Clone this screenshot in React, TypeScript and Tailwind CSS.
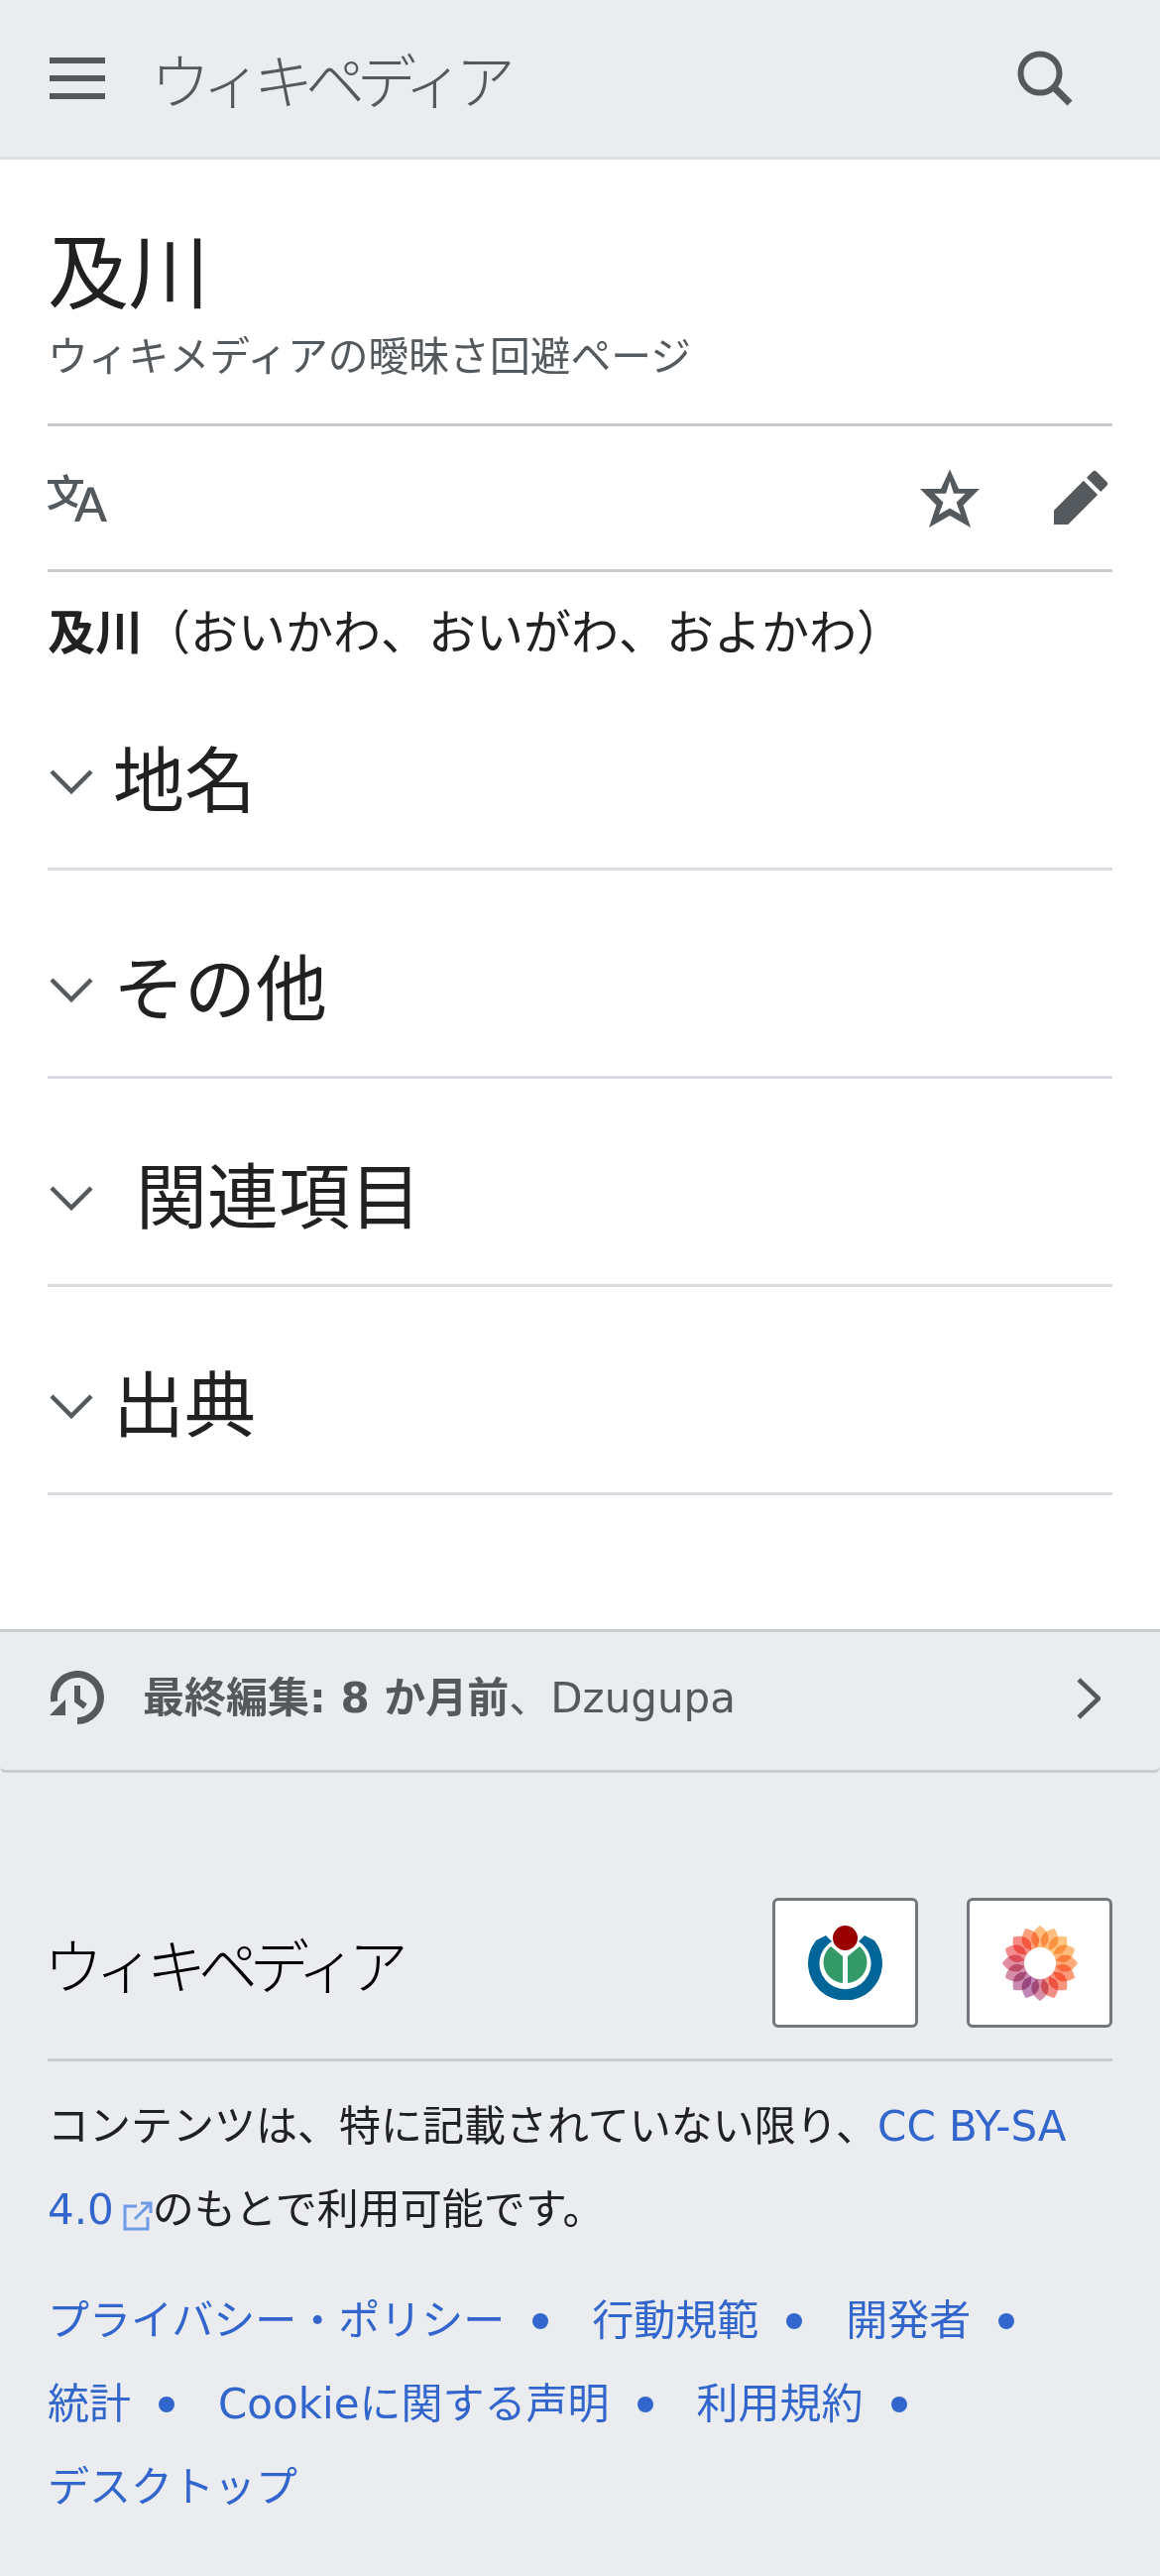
const petals = Array.from({ length: 16 }, (_, i) => i);
const petalColors = ["#fba24e","#fca54f","#fdb04e","#fca34d","#fb8a48","#fb7444","#f76a4a","#ef6355","#c85f83","#a8579a","#b55b92","#c45f87","#d8607a","#ee5f62","#f65f53","#fa7a48"];

function Bars() {
  return (
    <svg width="56" height="42" viewBox="0 0 56 42" fill="#54595d">
      <rect x="0" y="0" width="56" height="6" />
      <rect x="0" y="18" width="56" height="6" />
      <rect x="0" y="36" width="56" height="6" />
    </svg>
  );
}

function Chevron() {
  return (
    <svg className="ml-[2px]" width="44" height="26" viewBox="0 0 44 26" fill="none" stroke="#54595d" strokeWidth="4.5">
      <path d="M2 3 L22 23 L42 3" />
    </svg>
  );
}

function Section({ title, indent }: { title: string; indent?: boolean }) {
  return (
    <div className="h-[210px] pt-[32px] flex items-center border-b-[3px] border-[#d9dce0]">
      <Chevron />
      <h2 className={indent ? "ml-[43px] text-[72px] leading-[90px] text-[#202122]" : "ml-[20px] text-[72px] leading-[90px] text-[#202122]"}>{title}</h2>
    </div>
  );
}

function FooterLink({ label, bullet = true }: { label: string; bullet?: boolean }) {
  return (
    <span className="flex items-center text-[#3366cc]">
      <span>{label}</span>
      {bullet && <span className="w-[16px] h-[16px] rounded-full bg-[#3366cc] ml-[28px] mr-[44px]" />}
    </span>
  );
}

export default function App() {
  return (
    <div className="min-h-[2598px] flex flex-col bg-white font-['DejaVu_Sans','Noto_Sans_CJK_JP',sans-serif]">
      <header className="h-[161px] bg-[#eaecf0] border-b-[3px] border-[#dcdfe3] flex items-center pl-[50px] pr-[88px]">
        <Bars />
        <span className="ml-[46px] text-[60px] leading-[70px] tracking-[-8px] font-light text-[#54595d] font-['Noto_Sans_CJK_JP',serif]">ウィキペディア</span>
        <svg className="ml-auto" width="56" height="56" viewBox="0 0 56 56" fill="none" stroke="#54595d">
          <circle cx="23" cy="23" r="19.5" strokeWidth="6" />
          <path d="M36 36 L53 53" strokeWidth="7" />
        </svg>
      </header>

      <main className="px-[48px]">
        <h1 className="mt-[66px] text-[81.6px] leading-[100px] text-[#202122]">及川</h1>
        <p className="mt-[3px] text-[40.8px] leading-[60px] text-[#54595d]">ウィキメディアの曖昧さ回避ページ</p>
        <div className="mt-[37px] h-[150px] border-y-[3px] border-[#c8ccd1] flex items-center pr-[2px]">
          <svg width="60" height="60" viewBox="0 0 20 20" fill="#54595d">
            <path d="M20 18h-1.44a.6.6 0 0 1-.4-.12.8.8 0 0 1-.23-.31L17 15h-5l-1 2.54a.8.8 0 0 1-.22.3.6.6 0 0 1-.4.14H9l4.55-11.47h1.89zm-3.53-4.31L14.89 9.5a12 12 0 0 1-.39-1.24q-.09.37-.19.69l-.19.56-1.58 4.19zm-6.3-1.58a13.43 13.43 0 0 1-2.91-1.41 11.46 11.46 0 0 0 2.81-5.37H12V4H7.31a4 4 0 0 0-.2-.56C6.87 2.79 6.6 2 6.6 2l-1.47.5s.4.89.6 1.5H0v1.33h2.15A11.23 11.23 0 0 0 5 10.7a17.19 17.19 0 0 1-5 2.1q.56.82.87 1.38a23.28 23.28 0 0 0 5.22-2.51 15.64 15.64 0 0 0 3.56 1.77zM3.63 5.33h4.91a8.11 8.11 0 0 1-2.45 4.45 9.11 9.11 0 0 1-2.46-4.45" />
          </svg>
          <svg className="ml-auto" width="60" height="60" viewBox="0 0 20 20" fill="#54595d">
            <path d="M20 7h-7L10 .5 7 7H0l5.5 5.5L3 20l7-4 7 4-2.5-7.5zm-10 6.5-3.7 2.2 1.5-4.1-3-3h3.9L10 4.4l1.3 4.2h3.9l-3 3 1.5 4.1z" />
          </svg>
          <svg className="ml-[72px]" width="60" height="60" viewBox="0 0 20 20" fill="#54595d">
            <path d="m16.77 8 1.94-2a1 1 0 0 0 0-1.41l-3.34-3.3a1 1 0 0 0-1.41 0L12 3.23zM1 14.25V19h4.75l9.96-9.96-4.75-4.75z" />
          </svg>
        </div>
        <p className="mt-[31px] text-[48px] leading-[60px] text-[#202122]"><b>及川</b>（おいかわ、おいがわ、およかわ）</p>
        <Section title="地名" />
        <Section title="その他" />
        <Section title="関連項目" indent />
        <Section title="出典" />
      </main>

      <footer className="mt-[135px] flex-1 bg-[#eaecf0]">
        <div className="h-[145px] pb-[6px] border-y-[3px] border-[#c8ccd1] rounded-b-[6px] flex items-center pl-[50px] pr-[60px]">
          <svg width="56" height="56" viewBox="0 0 56 56" fill="none" stroke="#54595d">
            <path d="M28 50.5 A23.5 23.5 0 1 0 4.8 31" strokeWidth="7" />
            <path d="M0 45 H16 V29 Z" fill="#54595d" stroke="none" />
            <path d="M28 15 V30 L36 36" strokeWidth="6" />
          </svg>
          <p className="ml-[38px] text-[42px] leading-[60px] text-[#54595d]"><b>最終編集: 8 か月前</b>、Dzugupa</p>
          <svg className="ml-auto" width="24" height="42" viewBox="0 0 24 42" fill="none" stroke="#54595d" strokeWidth="4.5">
            <path d="M2 2 L22 21 L2 40" />
          </svg>
        </div>

        <div className="mx-[48px] mt-[126px] pb-[31px] border-b-[3px] border-[#c8ccd1] flex items-center">
          <span className="-ml-[4px] text-[60px] leading-[70px] tracking-[-8px] font-light text-black font-['Noto_Sans_CJK_JP',serif]">ウィキペディア</span>
          <div className="ml-auto flex gap-[49px]">
            <div className="w-[147px] h-[131px] bg-white border-[3px] border-[#72777d] rounded-[6px] flex items-center justify-center">
              <svg width="75" height="75" viewBox="0 0 75 75">
                <path d="M8 15 A37.5 37.5 0 1 0 67 15 L57 10 L51 16 A26 26 0 1 1 24 16 L18 10 Z" fill="#069" />
                <circle cx="37.5" cy="12.5" r="12.5" fill="#900" />
                <path d="M23 21 L35 31 V58 A21 21 0 0 1 23 21 Z" fill="#396" />
                <path d="M52 21 L40 31 V58 A21 21 0 0 0 52 21 Z" fill="#396" />
              </svg>
            </div>
            <div className="w-[147px] h-[131px] bg-white border-[3px] border-[#72777d] rounded-[6px] flex items-center justify-center">
              <svg width="76" height="76" viewBox="0 0 76 76">
                {petals.map((i) => (
                  <path key={i} className="mix-blend-multiply" d="M38 0 C45 5 48 10 46 17 L38 26 L30 17 C28 10 31 5 38 0 Z" fill={petalColors[i]} fillOpacity="0.72" transform={`rotate(${i * 22.5} 38 38)`} />
                ))}
                <circle cx="38" cy="38" r="16" fill="#fff" />
              </svg>
            </div>
          </div>
        </div>

        <div className="px-[48px] pt-[24px] text-[42px] leading-[84px] text-[#202122]">
          <p>コンテンツは、特に記載されていない限り、<span className="text-[#3366cc]">CC BY-SA</span>{" "}<span className="text-[#3366cc]">4.0</span>
            <svg className="inline-block ml-[9px] align-[-7px]" width="30" height="30" viewBox="0 0 30 30" fill="none" stroke="#6f9be8" strokeWidth="3">
              <path d="M14 5H2v23h23V16" />
              <path d="M12 18 L27 3 M18 2 H28 V12" />
            </svg>
            のもとで利用可能です。</p>
          <div className="mt-[28px] flex flex-wrap">
            <FooterLink label="プライバシー・ポリシー" />
            <FooterLink label="行動規範" />
            <FooterLink label="開発者" />
            <FooterLink label="統計" />
            <FooterLink label="Cookieに関する声明" />
            <FooterLink label="利用規約" />
            <FooterLink label="デスクトップ" bullet={false} />
          </div>
        </div>
      </footer>
    </div>
  );
}
